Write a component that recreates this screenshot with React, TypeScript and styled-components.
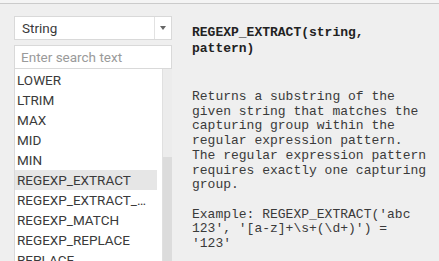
import React from 'react';
import styled, { createGlobalStyle } from 'styled-components';

const GlobalStyle = createGlobalStyle`
  html, body {
    margin: 0;
    padding: 0;
    background: #f4f4f4;
  }
`;

const functions = [
  'LOWER',
  'LTRIM',
  'MAX',
  'MID',
  'MIN',
  'REGEXP_EXTRACT',
  'REGEXP_EXTRACT_NTH',
  'REGEXP_MATCH',
  'REGEXP_REPLACE',
  'REPLACE',
  'RIGHT'
];

const Frame = styled.div`
  width: 439px;
  height: 261px;
  padding-top: 3px;
  box-sizing: border-box;
  overflow: hidden;
  background: #f4f4f4;
`;

const Panel = styled.div`
  display: flex;
  height: 258px;
  background: #efefef;
  border-top: 1px solid #cbcbcb;
  box-sizing: border-box;
`;

const Sidebar = styled.div`
  display: flex;
  flex-direction: column;
  width: 158px;
  margin-left: 14px;
  padding-top: 12px;
  font-family: Roboto, 'Noto Sans', sans-serif;
  font-size: 13.5px;
  color: #3a3a3a;
`;

const Select = styled.div`
  display: flex;
  align-items: center;
  height: 24px;
  background: #fff;
  border: 1px solid #d9d9d9;
  box-sizing: border-box;
`;

const SelectValue = styled.div`
  flex: 1;
  padding-left: 7px;
`;

const SelectArrow = styled.div`
  width: 16px;
  height: 100%;
  border-left: 1px solid #e2e2e2;
  display: flex;
  align-items: center;
  justify-content: center;

  &::after {
    content: '';
    border-left: 3.5px solid transparent;
    border-right: 3.5px solid transparent;
    border-top: 4px solid #666;
  }
`;

const Search = styled.input`
  margin-top: 5px;
  height: 24px;
  border: 1px solid #d9d9d9;
  padding: 0 0 0 6px;
  font: inherit;
  color: #333;
  background: #fff;
  outline: none;
  box-sizing: border-box;

  &::placeholder {
    color: #9a9a9a;
  }
`;

const ListBox = styled.div`
  flex: 1;
  display: flex;
  background: #fff;
  border-left: 1px solid #d9d9d9;
  overflow: hidden;
`;

const Items = styled.div`
  width: 142px;
  padding-top: 1px;
`;

const Item = styled.div<{ $selected?: boolean }>`
  height: 20px;
  line-height: 20px;
  padding: 0 4px 0 2px;
  white-space: nowrap;
  overflow: hidden;
  text-overflow: ellipsis;
  background: ${({ $selected }) => ($selected ? '#e6e6e6' : 'transparent')};
`;

const ScrollTrack = styled.div`
  margin-left: auto;
  width: 10px;
  display: flex;
  flex-direction: column;
  background: #ececec;
  border-left: 1px solid #e0e0e0;
  box-sizing: border-box;
`;

const ScrollThumb = styled.div`
  margin-top: 88px;
  flex: 1;
  background: #dcdcdc;
`;

const Help = styled.div`
  margin-left: 20px;
  padding-top: 21px;
  font-family: 'Liberation Mono', 'Courier New', monospace;
  font-size: 13px;
  color: #3a3a3a;
  white-space: pre;
`;

const Signature = styled.div`
  font-weight: bold;
  line-height: 16px;
  color: #222;
`;

const Description = styled.div`
  margin-top: 33px;
  line-height: 14.7px;
`;

function App (): React.ReactElement {
  return (
    <Frame>
      <GlobalStyle />
      <Panel>
        <Sidebar>
          <Select>
            <SelectValue>String</SelectValue>
            <SelectArrow />
          </Select>
          <Search placeholder='Enter search text' />
          <ListBox>
            <Items>
              {functions.map((name) => (
                <Item $selected={name === 'REGEXP_EXTRACT'} key={name}>{name}</Item>
              ))}
            </Items>
            <ScrollTrack>
              <ScrollThumb />
            </ScrollTrack>
          </ListBox>
        </Sidebar>
        <Help>
          <Signature>{'REGEXP_EXTRACT(string,\npattern)'}</Signature>
          <Description>
            {'Returns a substring of the\ngiven string that matches the\ncapturing group within the\nregular expression pattern.\nThe regular expression pattern\nrequires exactly one capturing\ngroup.\n\nExample: REGEXP_EXTRACT(\'abc\n123\', \'[a-z]+\\s+(\\d+)\') =\n\'123\''}
          </Description>
        </Help>
      </Panel>
    </Frame>
  );
}

export default App;
